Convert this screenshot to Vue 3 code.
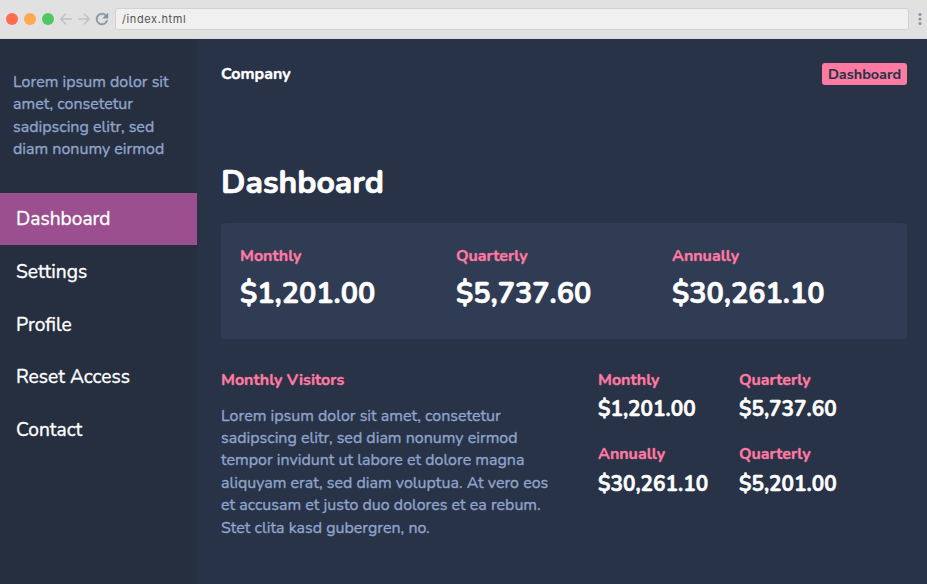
<script setup>
const nav = ['Dashboard', 'Settings', 'Profile', 'Reset Access', 'Contact']
const totals = [
  { label: 'Monthly', value: '$1,201.00' },
  { label: 'Quarterly', value: '$5,737.60' },
  { label: 'Annually', value: '$30,261.10' },
]
const visitors = [
  { label: 'Monthly', value: '$1,201.00' },
  { label: 'Quarterly', value: '$5,737.60' },
  { label: 'Annually', value: '$30,261.10' },
  { label: 'Quarterly', value: '$5,201.00' },
]
</script>

<template>
  <div class="window">
    <header class="chrome">
      <i class="light red"></i>
      <i class="light orange"></i>
      <i class="light green"></i>
      <svg class="arrow" viewBox="0 0 14 14"><path d="M13 7H2M7 1.8L1.7 7L7 12.2" /></svg>
      <svg class="arrow next" viewBox="0 0 14 14"><path d="M1 7H12M7 1.8L12.3 7L7 12.2" /></svg>
      <svg class="reload" viewBox="0 0 24 24">
        <path d="M17.65 6.35A7.95 7.95 0 0 0 12 4a8 8 0 1 0 7.73 10h-2.08A6 6 0 1 1 12 6c1.66 0 3.14.69 4.22 1.78L13 11h7V4z" />
      </svg>
      <div class="address">/index.html</div>
      <svg class="dots" viewBox="0 0 4 14">
        <circle cx="2" cy="2.5" r="1.5" /><circle cx="2" cy="7" r="1.5" /><circle cx="2" cy="11.5" r="1.5" />
      </svg>
    </header>
    <div class="body">
      <aside class="sidebar">
        <p class="intro">Lorem ipsum dolor sit<br />amet, consetetur<br />sadipscing elitr, sed<br />diam nonumy eirmod</p>
        <nav>
          <a v-for="(item, i) in nav" :key="item" class="link" :class="{ active: i === 0 }">{{ item }}</a>
        </nav>
      </aside>
      <main class="content">
        <div class="topbar">
          <strong class="brand">Company</strong>
          <span class="badge">Dashboard</span>
        </div>
        <h1>Dashboard</h1>
        <section class="totals">
          <div v-for="t in totals" :key="t.label">
            <div class="label">{{ t.label }}</div>
            <div class="big">{{ t.value }}</div>
          </div>
        </section>
        <section class="details">
          <div>
            <div class="label">Monthly Visitors</div>
            <p class="copy">Lorem ipsum dolor sit amet, consetetur<br />sadipscing elitr, sed diam nonumy eirmod<br />tempor invidunt ut labore et dolore magna<br />aliquyam erat, sed diam voluptua. At vero eos<br />et accusam et justo duo dolores et ea rebum.<br />Stet clita kasd gubergren, no.</p>
          </div>
          <div class="grid">
            <div v-for="(v, i) in visitors" :key="i">
              <div class="label">{{ v.label }}</div>
              <div class="small">{{ v.value }}</div>
            </div>
          </div>
        </section>
      </main>
    </div>
  </div>
</template>

<style>
body { background: #283347; }
</style>

<style scoped>
.window {
  height: 584px;
  display: flex;
  flex-direction: column;
  overflow: hidden;
  font-family: Nunito, Lato, sans-serif;
  font-size: 16px;
  line-height: 22.4px;
  color: #fff;
  white-space: nowrap;
  -webkit-text-stroke: 0.35px currentColor;
}
.chrome {
  height: 39px;
  box-sizing: border-box;
  flex: none;
  display: flex;
  align-items: center;
  padding: 0 5px 0 6px;
  background: #e1e1e1;
  border-bottom: 1px solid #d9d9d9;
}
.light { width: 12px; height: 12px; border-radius: 50%; margin-right: 6px; }
.red { background: #ff6d4d; }
.orange { background: #ffa94f; }
.green { background: #4fc762; }
.arrow { width: 14px; height: 14px; margin-left: -1px; fill: none; stroke: #bcc2c6; stroke-width: 1.4; }
.next { margin-left: 4px; }
.reload { width: 18px; height: 18px; margin-left: 2px; fill: #8494a0; stroke: #8494a0; stroke-width: 0.5; }
.address {
  flex: 1;
  height: 22px;
  box-sizing: border-box;
  margin: 0 9px 0 4px;
  padding-left: 6px;
  border: 1px solid #d2d2d2;
  border-radius: 3px;
  background: #f0f0f0;
  color: #555;
  font: 400 11px/20px Inter, sans-serif;
  letter-spacing: 0.6px;
  -webkit-text-stroke: 0;
}
.dots { width: 4px; height: 14px; fill: #8494a0; }
.body { flex: 1; display: grid; grid-template-columns: 197px 1fr; }
.sidebar { background: #262f3f; }
.intro {
  margin: 0;
  padding: 32px 13px 32.4px;
  color: #8fa3cb;
}
.link {
  display: block;
  height: 52.8px;
  padding-left: 16px;
  line-height: 52px;
  font-size: 19.2px;
  font-weight: 400;
  box-sizing: border-box;
}
.active { background: linear-gradient(#9b4f8e, #9b4f8e) 0 0 / 100% 52px no-repeat; }
.content { padding: 24px 20px 0 24px; background: #283347; }
.topbar { display: flex; justify-content: space-between; align-items: center; height: 22px; }
.brand { font-weight: 700; }
.badge {
  width: 85px;
  height: 22px;
  border-radius: 3px;
  background: #ff7aa2;
  color: #283347;
  font-size: 14.4px;
  font-weight: 700;
  text-align: center;
  -webkit-text-stroke: 0.1px currentColor;
}
h1 { margin: 76px 0 0; font-size: 32px; line-height: 44px; font-weight: 700; -webkit-text-stroke: 0.7px currentColor; }
.totals {
  display: grid;
  grid-template-columns: repeat(3, 216px);
  height: 116px;
  margin-top: 18px;
  box-sizing: border-box;
  padding: 22px 19px;
  border-radius: 4px;
  background: #303b54;
}
.label { color: #ff7aa2; font-weight: 700; }
.big { margin-top: 6px; font-size: 28.8px; line-height: 42px; font-weight: 700; -webkit-text-stroke: 0.6px currentColor; }
.details { display: grid; grid-template-columns: 377px 1fr; margin-top: 30px; }
.copy { margin: 13.2px 0 0; color: #8fa3cb; }
.grid { display: grid; grid-template-columns: 141px 141px; grid-auto-rows: 74.4px; }
.small { margin-top: 2.8px; font-size: 20.8px; line-height: 30px; font-weight: 700; -webkit-text-stroke: 0.5px currentColor; }
</style>
